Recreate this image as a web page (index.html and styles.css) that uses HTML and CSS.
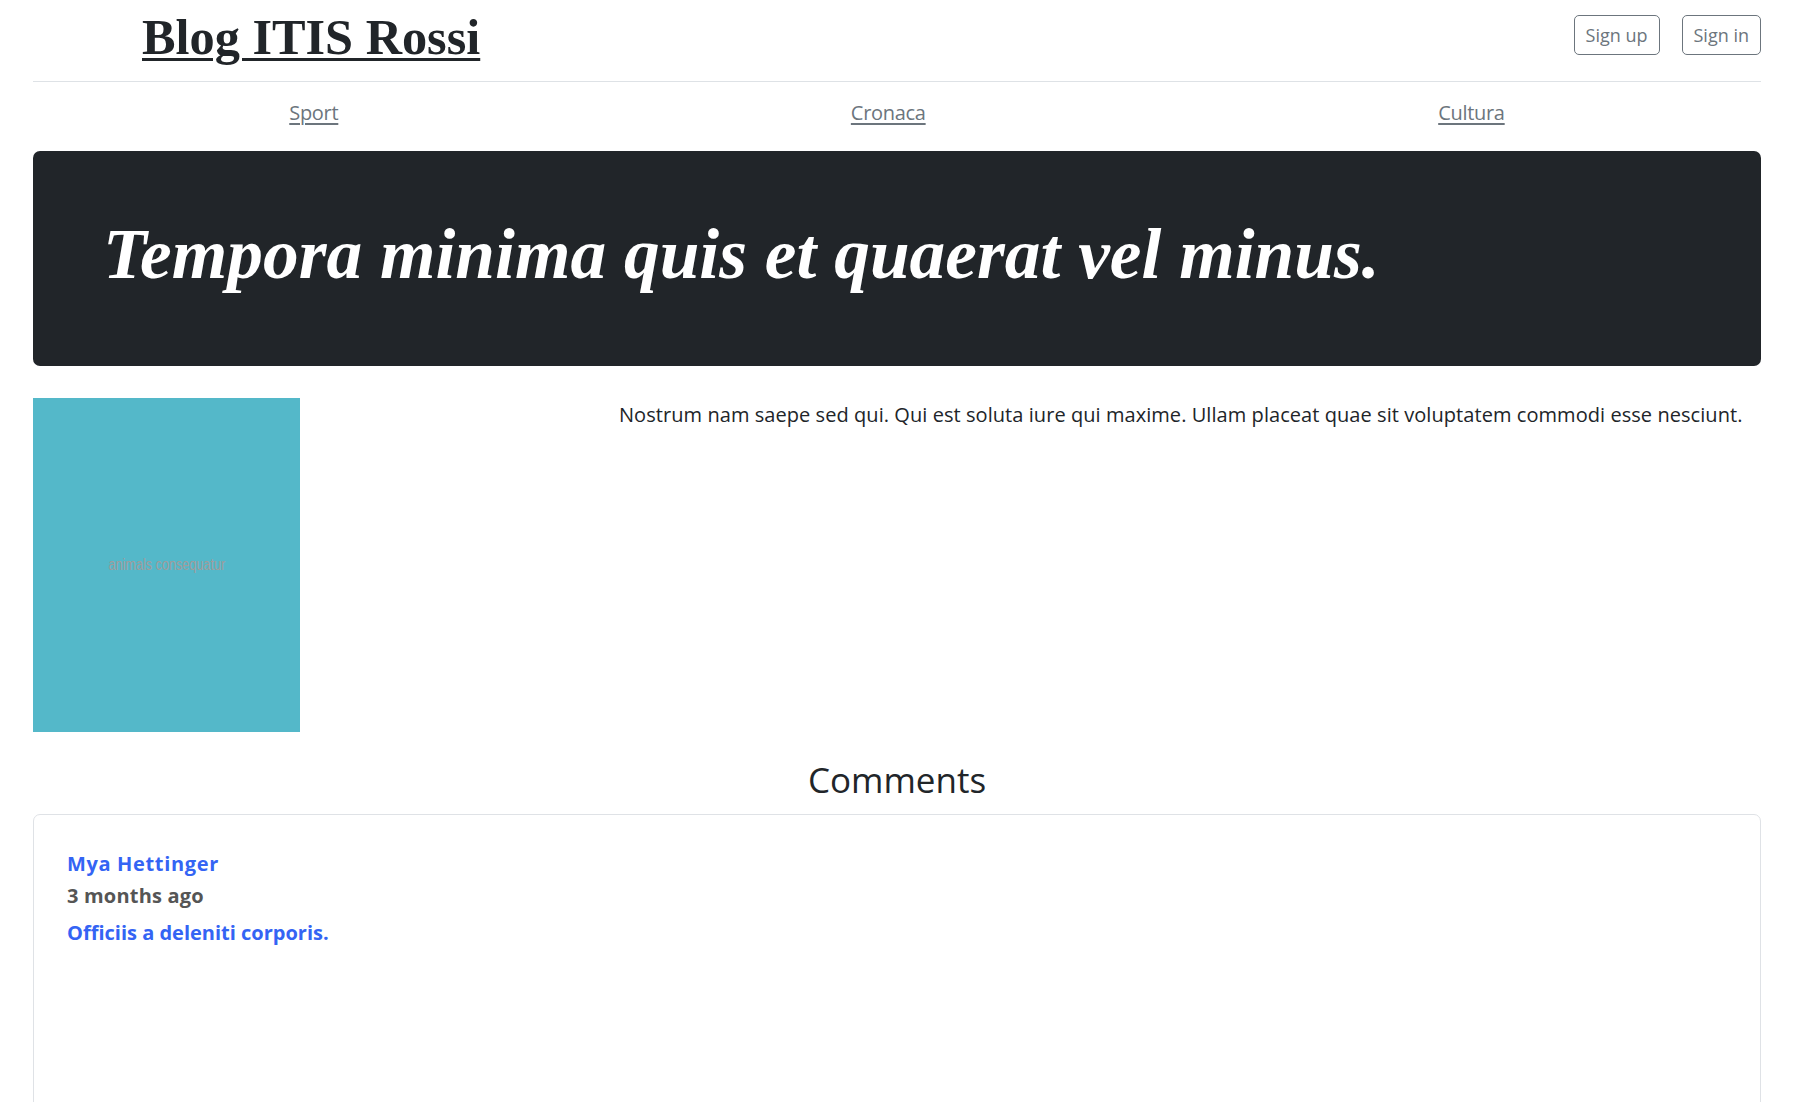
FILE: index.html
```html
<!DOCTYPE html>
<html lang="it">
<head>
<meta charset="utf-8">
<title>Blog ITIS Rossi</title>
<link rel="stylesheet" href="styles.css">
</head>
<body>
<div class="container">
  <header class="blog-header">
    <a class="logo" href="#">Blog ITIS Rossi</a>
    <div class="auth">
      <a class="btn" href="#">Sign up</a>
      <a class="btn" href="#">Sign in</a>
    </div>
  </header>

  <nav class="topnav">
    <a href="#">Sport</a>
    <a href="#">Cronaca</a>
    <a href="#">Cultura</a>
  </nav>

  <div class="jumbo">
    <h1>Tempora minima quis et quaerat vel minus.</h1>
  </div>

  <div class="post">
    <div class="thumb"><span class="thumb-label">animals consequatur</span></div>
    <p class="post-text">Nostrum nam saepe sed qui. Qui est soluta iure qui maxime. Ullam placeat quae sit voluptatem commodi esse nesciunt.</p>
  </div>

  <h3 class="comments-title">Comments</h3>

  <div class="card">
    <div class="comment">
      <a class="comment-author" href="#">Mya Hettinger</a>
      <div class="comment-date">3 months ago</div>
      <a class="comment-body" href="#">Officiis a deleniti corporis.</a>
    </div>
  </div>
</div>
</body>
</html>
```

FILE: styles.css
```css
* { box-sizing: border-box; }

html, body {
  margin: 0;
  padding: 0;
  background: #fff;
}

body {
  font-family: "Open Sans", "Noto Sans", sans-serif;
  font-size: 20px;
  line-height: 1.5;
  color: #212529;
}

.container {
  width: 1728px;
  margin-left: 33px;
}

/* header */
.blog-header {
  display: flex;
  justify-content: space-between;
  align-items: flex-start;
  height: 82px;
  border-bottom: 1px solid #dee2e6;
}

.logo {
  margin-top: 7px;
  margin-left: 109px;
  font-family: "Liberation Serif", "Times New Roman", serif;
  font-weight: 700;
  font-size: 50.3px;
  line-height: 60px;
  color: #212529;
  text-decoration: underline;
  text-decoration-thickness: 3px;
  text-underline-offset: 4px;
}

.auth {
  display: flex;
  gap: 22px;
  margin-top: 15px;
}

.btn {
  display: inline-block;
  height: 40px;
  padding: 5px 11px;
  border: 1px solid #6c757d;
  border-radius: 5px;
  font-size: 18px;
  line-height: 28px;
  color: #6c757d;
  text-decoration: none;
}

/* nav */
.topnav {
  display: flex;
  justify-content: space-around;
  align-items: flex-start;
  height: 69px;
  padding-top: 16px;
}

.topnav a {
  padding: 0 8px;
  color: #6c757d;
  text-decoration: underline;
  text-underline-offset: 3px;
  letter-spacing: -0.3px;
}

/* jumbotron */
.jumbo {
  background: #212529;
  border-radius: 7px;
  padding: 60px 70px 70px 70px;
  height: 215px;
}

.jumbo h1 {
  margin: 0;
  font-family: "Liberation Serif", "Times New Roman", serif;
  font-style: italic;
  font-weight: 700;
  font-size: 71.4px;
  line-height: 85px;
  color: #fff;
  white-space: nowrap;
}

/* post */
.post {
  display: grid;
  grid-template-columns: 586px 1fr;
  margin-top: 32px;
}

.thumb {
  width: 267px;
  height: 334px;
  background: #54b8c9;
  display: flex;
  align-items: center;
  justify-content: center;
}

.thumb-label {
  display: inline-block;
  font-family: "Liberation Sans", Arial, sans-serif;
  font-size: 16px;
  line-height: 16px;
  color: #a09c9c;
  transform: scaleX(0.79);
  white-space: nowrap;
}

.post-text {
  margin: 0;
  padding-top: 2px;
  line-height: 30px;
  white-space: nowrap;
  letter-spacing: 0.06px;
}

/* comments */
.comments-title {
  margin: 27px 0 13px;
  text-align: center;
  font-size: 35px;
  font-weight: 500;
  line-height: 42px;
  color: #212529;
}

.card {
  border: 1px solid #dfe2e6;
  border-radius: 7px;
  min-height: 300px;
  padding: 33px 33px;
}

.comment {
  display: flex;
  flex-direction: column;
  align-items: flex-start;
}

.comment-author,
.comment-body {
  color: #3464f4;
  font-weight: 700;
  text-decoration: none;
  line-height: 32px;
}

.comment-author {
  letter-spacing: 0.65px;
}

.comment-date {
  color: #555;
  font-weight: 700;
  line-height: 32px;
  letter-spacing: 0.2px;
}

.comment-body {
  margin-top: 5px;
}
```
